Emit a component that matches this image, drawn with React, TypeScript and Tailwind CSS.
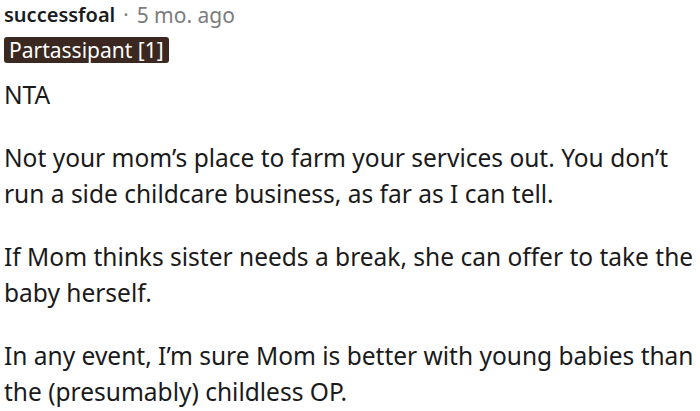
import React from 'react'

const paragraphs: string[][] = [
  ['NTA'],
  [
    'Not your mom’s place to farm your services out. You don’t',
    'run a side childcare business, as far as I can tell.',
  ],
  [
    'If Mom thinks sister needs a break, she can offer to take the',
    'baby herself.',
  ],
  [
    'In any event, I’m sure Mom is better with young babies than',
    'the (presumably) childless OP.',
  ],
]

export default function App() {
  return (
    <div className="w-[700px] h-[411px] overflow-hidden bg-white pl-[4px] pt-[1px]">
      <div className="flex items-center gap-[8px] h-[28px] text-[20px] font-['Noto_Sans',sans-serif] leading-[28px]">
        <span className="font-semibold text-[#1c1c1c]">successfoal</span>
        <span className="text-[#7c7c7c]">·</span>
        <span className="text-[#7c7c7c] text-[21px]">5 mo. ago</span>
      </div>
      <div className="mt-[8px] flex">
        <span className="inline-block rounded-[3px] bg-[#3b2820] px-[5px] h-[26px] leading-[26px] text-[21px] text-white font-['Noto_Sans',sans-serif]">
          Partassipant [1]
        </span>
      </div>
      <div className="mt-[14px] font-['Noto_Sans',sans-serif] text-[24.5px] leading-[36px] text-[#1a1a1b]">
        {paragraphs.map((lines, i) => (
          <p key={i} className={i === 0 ? '' : 'mt-[27px]'}>
            {lines.map((line, j) => (
              <span key={j} className="block whitespace-nowrap">
                {line}
              </span>
            ))}
          </p>
        ))}
      </div>
    </div>
  )
}
